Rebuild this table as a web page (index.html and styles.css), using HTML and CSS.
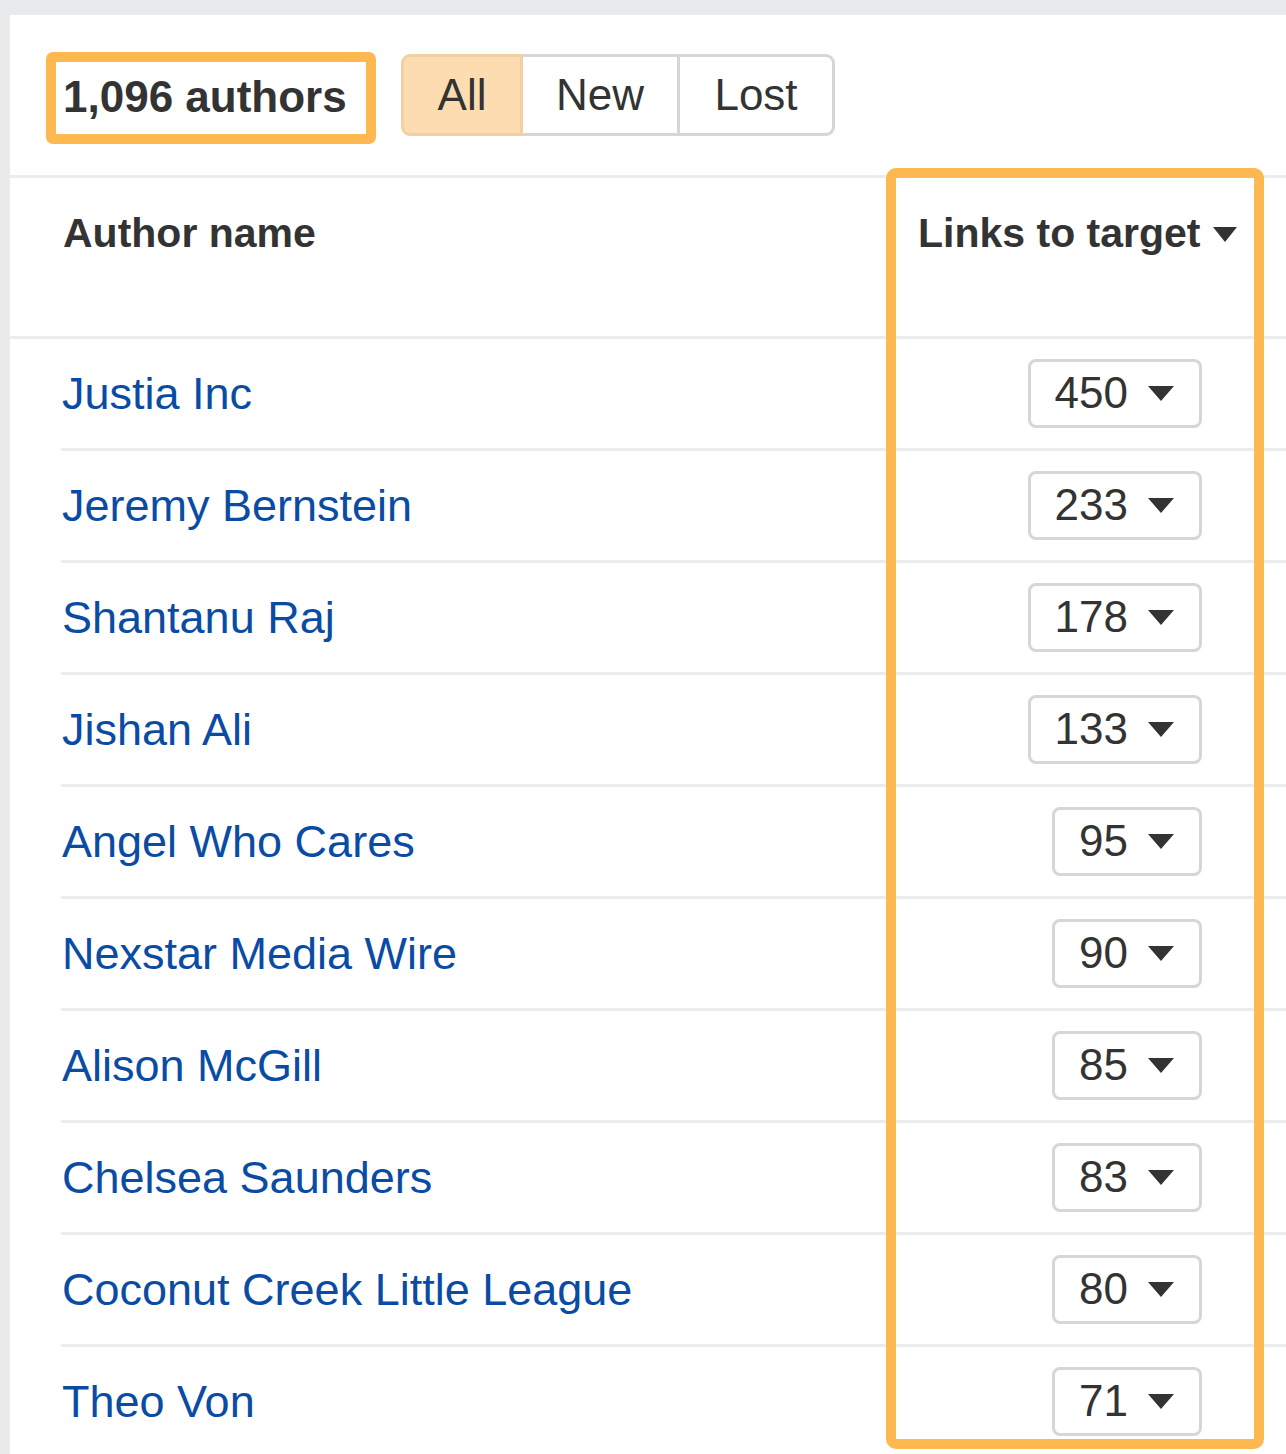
FILE: index.html
```html
<!DOCTYPE html>
<html>
<head>
<meta charset="utf-8">
<link rel="stylesheet" href="styles.css">
</head>
<body>
<div class="panel">
  <div class="toolbar">
    <div class="count-box">1,096 authors</div>
    <div class="seg">
      <button class="seg-btn active">All</button>
      <button class="seg-btn new">New</button>
      <button class="seg-btn lost">Lost</button>
    </div>
  </div>
  <div class="thead">
    <div class="th th-name">Author name</div>
    <div class="th th-links">Links to target <span class="caret caret-lg"></span></div>
  </div>
  <div class="rows">
    <div class="row"><a class="name">Justia Inc</a><span class="num">450 <span class="caret"></span></span></div>
    <div class="row"><a class="name">Jeremy Bernstein</a><span class="num">233 <span class="caret"></span></span></div>
    <div class="row"><a class="name">Shantanu Raj</a><span class="num">178 <span class="caret"></span></span></div>
    <div class="row"><a class="name">Jishan Ali</a><span class="num">133 <span class="caret"></span></span></div>
    <div class="row"><a class="name">Angel Who Cares</a><span class="num">95 <span class="caret"></span></span></div>
    <div class="row"><a class="name">Nexstar Media Wire</a><span class="num">90 <span class="caret"></span></span></div>
    <div class="row"><a class="name">Alison McGill</a><span class="num">85 <span class="caret"></span></span></div>
    <div class="row"><a class="name">Chelsea Saunders</a><span class="num">83 <span class="caret"></span></span></div>
    <div class="row"><a class="name">Coconut Creek Little League</a><span class="num">80 <span class="caret"></span></span></div>
    <div class="row"><a class="name">Theo Von</a><span class="num">71 <span class="caret"></span></span></div>
  </div>
  <div class="col-highlight"></div>
</div>
</body>
</html>
```
FILE: styles.css
```css
html, body {
  margin: 0;
  padding: 0;
  height: 1454px;
  overflow: hidden;
}
body {
  background: #e9eaec;
  font-family: "Liberation Sans", Arial, sans-serif;
  color: #333;
}
.panel {
  position: relative;
  margin: 15px 0 0 10px;
  background: #fff;
  min-height: 1500px;
}
.toolbar {
  display: flex;
  align-items: flex-start;
  gap: 25px;
  padding: 37px 0 0 36px;
  height: 123px;
  border-bottom: 3px solid #ebecee;
}
.count-box {
  box-sizing: border-box;
  height: 92px;
  width: 330px;
  border: 10px solid #fdb84f;
  border-radius: 7px;
  display: flex;
  align-items: center;
  padding: 0 0 2px 7px;
  font-size: 44px;
  font-weight: bold;
  color: #333;
  white-space: nowrap;
}
.seg {
  display: flex;
  margin-top: 2px;
}
.seg-btn {
  box-sizing: border-box;
  height: 82px;
  border: 3px solid #d6d6d6;
  background: #fff;
  font-family: "Liberation Sans", Arial, sans-serif;
  font-size: 44px;
  color: #333;
  padding: 0 0 0;
  margin: 0 0 0 -3px;
  text-align: center;
}
.seg-btn.active {
  margin-left: 0;
  width: 122px;
  background: #fddcb1;
  border-color: #f2d0a2;
  border-radius: 9px 0 0 9px;
  position: relative;
  z-index: 1;
}
.seg-btn.new { width: 160px; }
.seg-btn.lost { width: 158px; border-radius: 0 9px 9px 0; }
.thead {
  display: grid;
  grid-template-columns: 855px auto;
  height: 161px;
  box-sizing: border-box;
  padding: 32px 0 0 53px;
  border-bottom: 3px solid #ebecee;
}
.th {
  font-size: 41px;
  font-weight: bold;
  color: #333;
  white-space: nowrap;
}
.th-links {
  display: flex;
  align-items: center;
  gap: 13px;
  height: 47px;
}
.caret {
  display: inline-block;
  width: 0;
  height: 0;
  border-left: 13px solid transparent;
  border-right: 13px solid transparent;
  border-top: 15px solid #333;
}
.caret-lg {
  border-left-width: 12px;
  border-right-width: 12px;
  margin-top: 2px;
}
.rows {
  margin-left: 51px;
}
.row {
  box-sizing: border-box;
  height: 112px;
  display: flex;
  align-items: center;
  justify-content: space-between;
  padding: 0 84px 0 1px;
  border-bottom: 3px solid #ebecee;
}
.name {
  font-size: 45px;
  color: #0a4ca3;
  text-decoration: none;
  white-space: nowrap;
}
.num {
  box-sizing: border-box;
  height: 69px;
  display: inline-flex;
  align-items: center;
  gap: 20px;
  padding: 0 25px 2px 24px;
  border: 3px solid #d6d6d6;
  border-radius: 8px;
  font-size: 44px;
  color: #333;
  white-space: nowrap;
  word-spacing: -12px;
}
.num .caret { margin-top: 2px; }
.col-highlight {
  position: absolute;
  left: 876px;
  top: 153px;
  width: 378px;
  height: 1281px;
  box-sizing: border-box;
  border: 10px solid #fdb84f;
  border-radius: 10px;
  pointer-events: none;
}
```
